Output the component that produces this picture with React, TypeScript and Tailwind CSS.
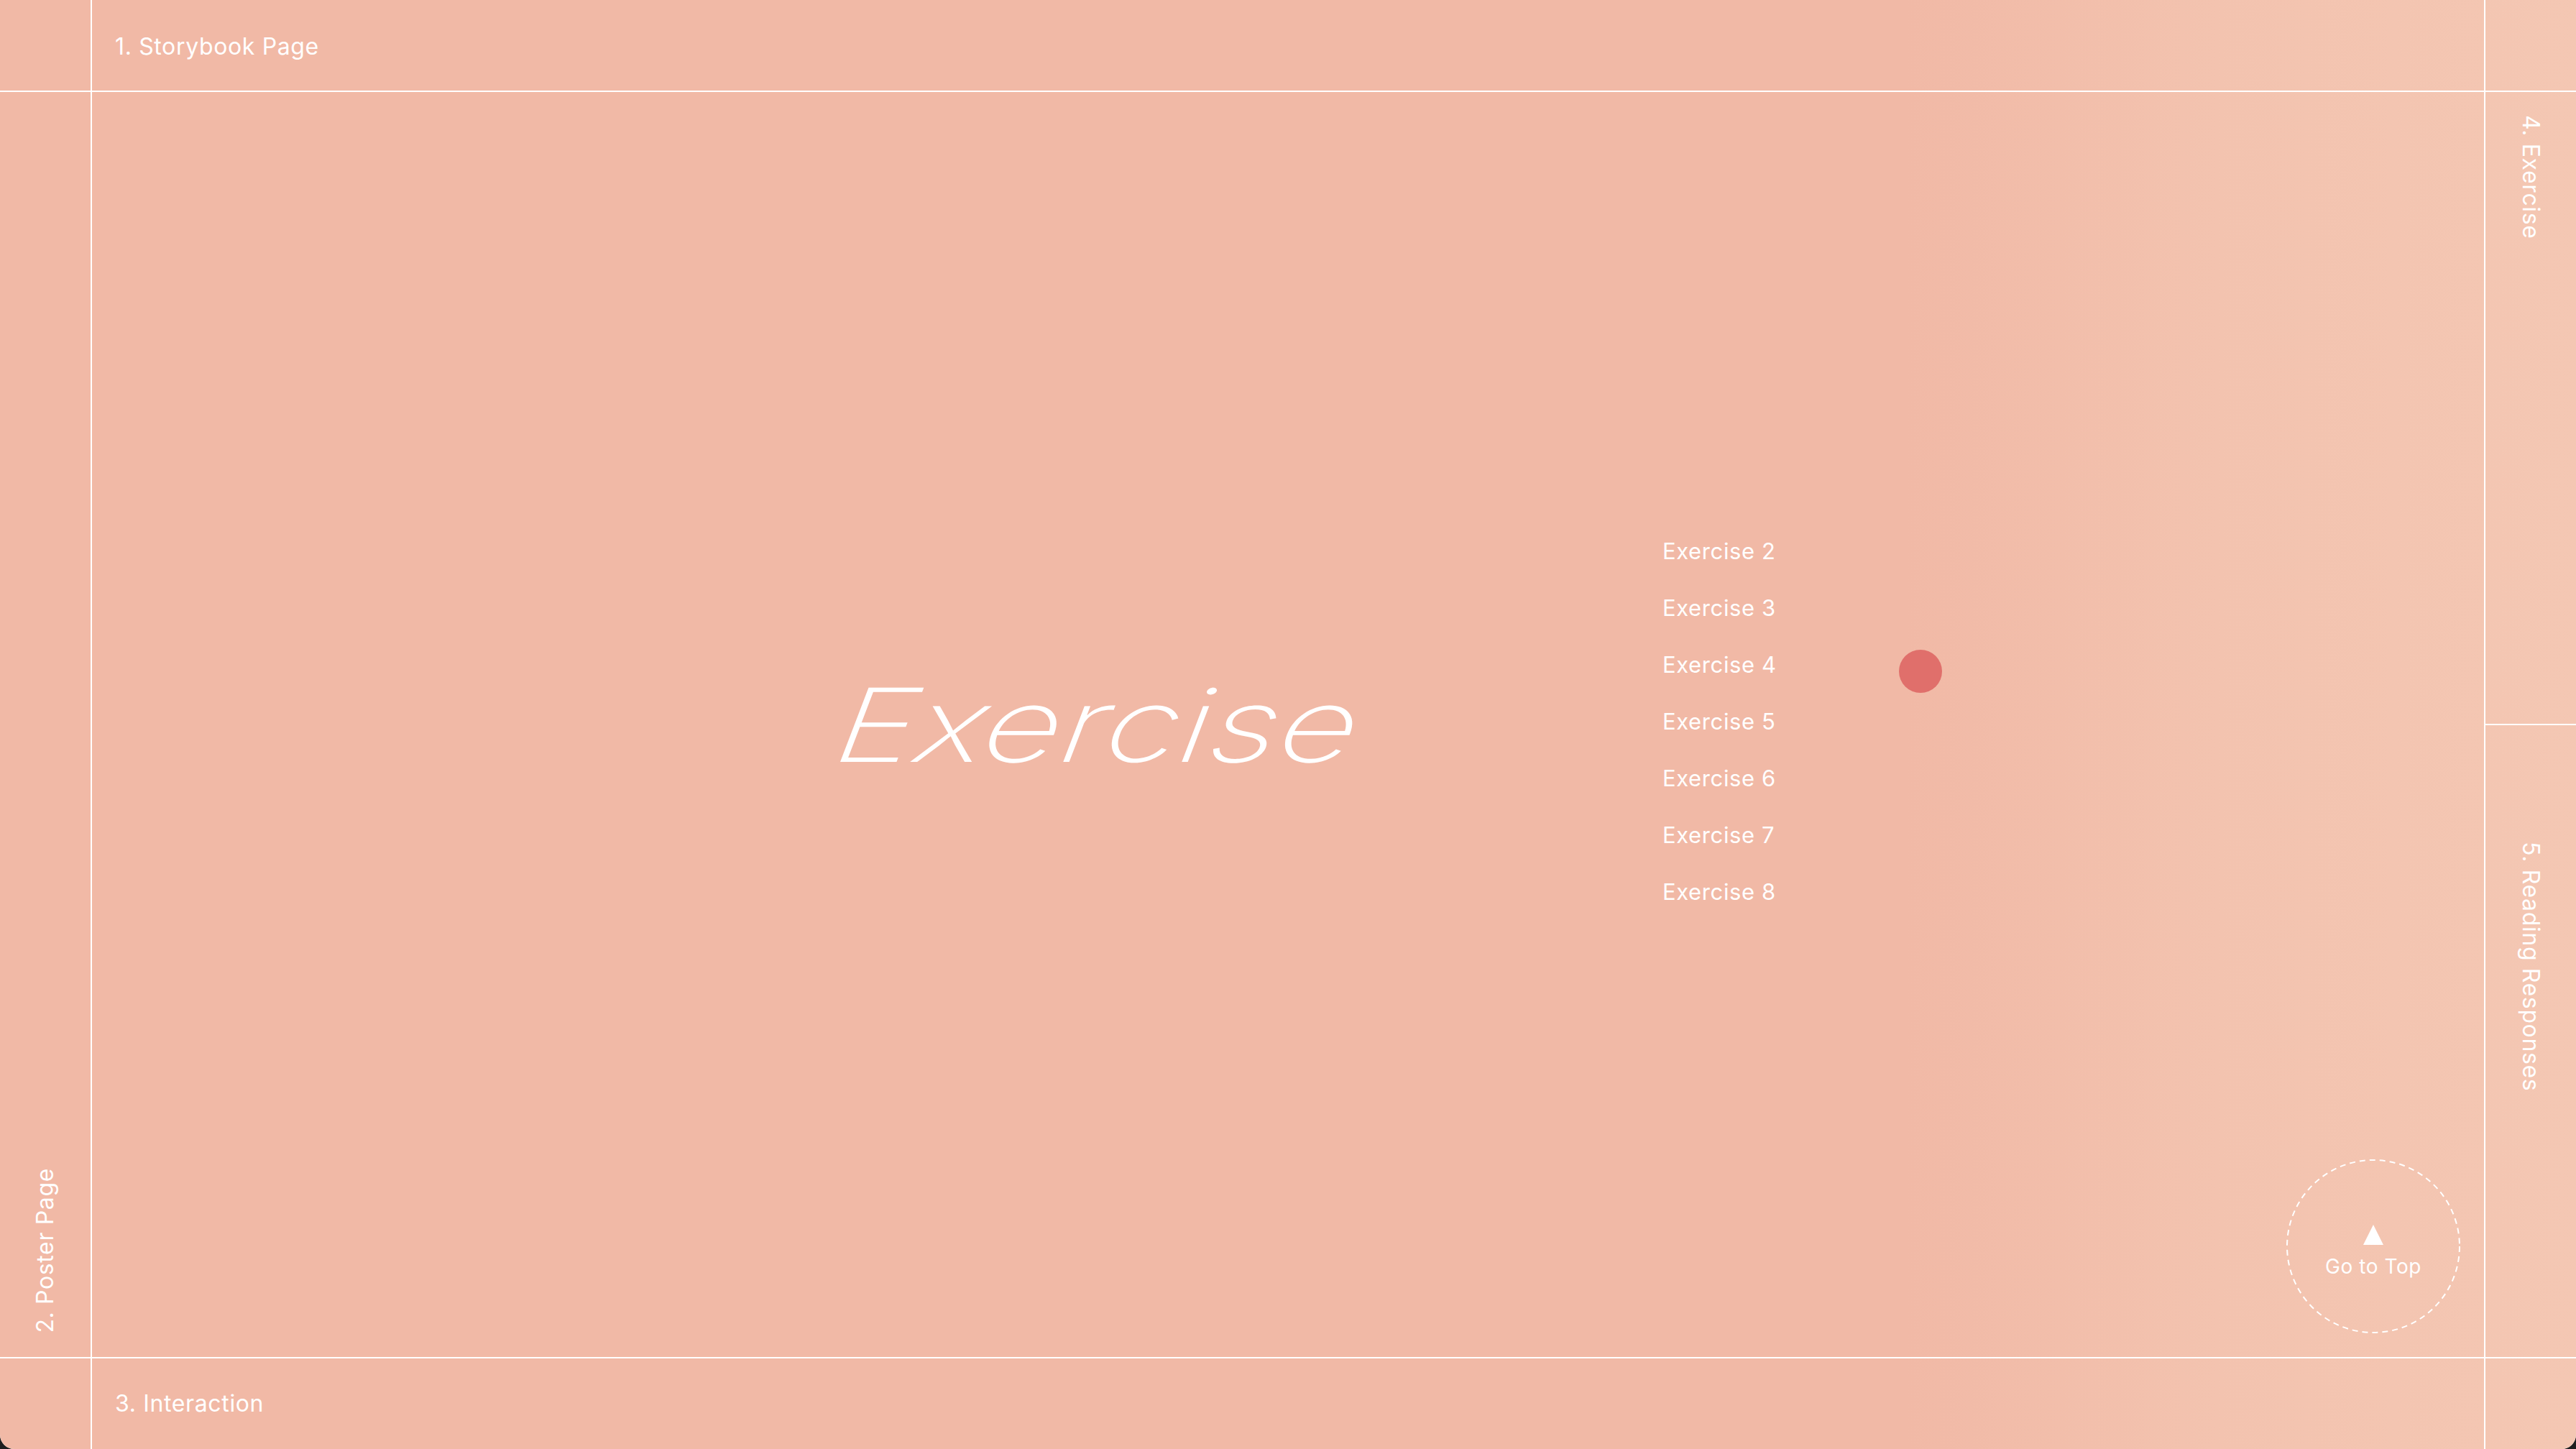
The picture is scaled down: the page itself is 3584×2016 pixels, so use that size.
import React from 'react';

const EXERCISES = ['Exercise 2', 'Exercise 3', 'Exercise 4', 'Exercise 5', 'Exercise 6', 'Exercise 7', 'Exercise 8'];

// one continuous gradient shared by every cell (bg-fixed keeps it aligned to the viewport)
const CELL =
  'bg-fixed bg-[linear-gradient(to_right,#f1b9a6_0%,#f1b9a6_74%,#f3c3af_86%,#f4c7b3_100%)]';

const FONT = "font-['Inter','Noto_Sans',sans-serif]";

function GoToTop() {
  return (
    <button className="absolute right-[33px] bottom-[33px] w-[242px] h-[242px] flex flex-col items-center pt-[91px] text-white">
      <svg className="absolute inset-0" width="242" height="242" viewBox="0 0 242 242" fill="none" aria-hidden>
        <circle cx="121" cy="121" r="120" stroke="#fff" strokeWidth="2" strokeDasharray="8 6" />
      </svg>
      <svg width="28" height="28" viewBox="0 0 28 28" aria-hidden>
        <polygon points="14,0 28,28 0,28" fill="#fff" />
      </svg>
      <span className="mt-[13px] text-[28px] leading-[34px] tracking-[0.02em]">Go to Top</span>
    </button>
  );
}

export default function App() {
  return (
    <div className={`w-[3584px] h-[2016px] bg-[#1f1f1f] ${FONT} text-white`}>
      <div className="w-full h-full rounded-b-[20px] overflow-hidden bg-white grid grid-cols-[126px_1fr_126px] grid-rows-[126px_1fr_126px] gap-[2px]">
        {/* top row */}
        <div className={CELL} />
        <div className={`${CELL} flex items-center pl-[32px] pt-[3px]`}>
          <span className="text-[32px] tracking-[0.02em] leading-none">1. Storybook Page</span>
        </div>
        <div className={CELL} />

        {/* middle row */}
        <div className={`${CELL} flex flex-col items-center justify-end pb-[33px]`}>
          <span className="text-[32px] tracking-[0.02em] leading-none [writing-mode:vertical-rl] rotate-180">
            2. Poster Page
          </span>
        </div>

        <div className={`${CELL} relative flex items-center pl-[1041px]`}>
          <div className="w-[708px] h-[142px] shrink-0">
            <span className="inline-block origin-left scale-x-[1.33] -skew-x-[16deg] text-[142px] leading-none font-extralight">
              Exercise
            </span>
          </div>

          <ul className="ml-[436px] pb-[10px] flex flex-col">
            {EXERCISES.map((label) => (
              <li key={label} className="text-[31px] leading-[79px] tracking-[0.02em]">
                {label}
              </li>
            ))}
          </ul>

          {/* cursor dot */}
          <span className="absolute left-[2514px] top-[776px] w-[60px] h-[60px] rounded-full bg-[#e06f6b]" />

          <GoToTop />
        </div>

        <div className="grid grid-rows-2 gap-[2px] bg-white">
          <div className={`${CELL} flex flex-col items-center pt-[32px]`}>
            <span className="text-[32px] tracking-[0.02em] leading-none [writing-mode:vertical-rl]">4. Exercise</span>
          </div>
          <div className={`${CELL} flex flex-col items-center pt-[162px]`}>
            <span className="text-[32px] tracking-[0.02em] leading-none [writing-mode:vertical-rl]">
              5. Reading Responses
            </span>
          </div>
        </div>

        {/* bottom row */}
        <div className={CELL} />
        <div className={`${CELL} flex items-center pl-[32px]`}>
          <span className="text-[32px] tracking-[0.02em] leading-none">3. Interaction</span>
        </div>
        <div className={CELL} />
      </div>
    </div>
  );
}
